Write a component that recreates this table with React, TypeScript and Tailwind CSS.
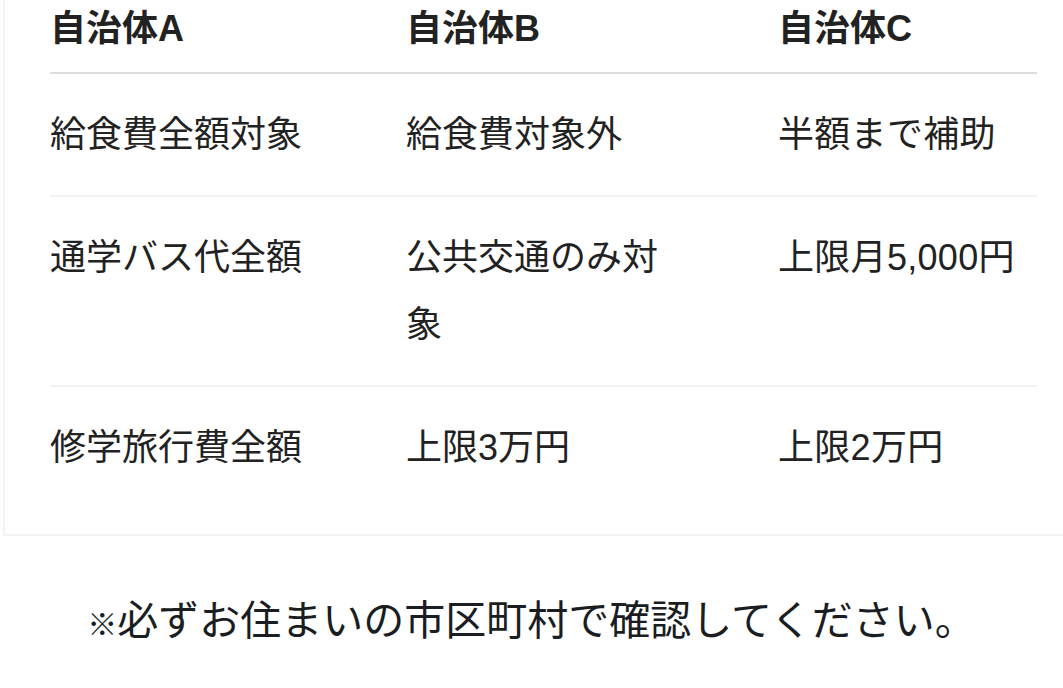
import React from "react";

type Row = { a: string; b: string; c: string };

const rows: Row[] = [
  { a: "給食費全額対象", b: "給食費対象外", c: "半額まで補助" },
  { a: "通学バス代全額", b: "公共交通のみ対象", c: "上限月5,000円" },
  { a: "修学旅行費全額", b: "上限3万円", c: "上限2万円" },
];

const font = {
  fontFamily: '"Liberation Sans", "Noto Sans CJK JP", sans-serif',
};

export default function App() {
  return (
    <div className="w-[1063px] h-[688px] overflow-hidden bg-white" style={font}>
      {/* comparison card, top edge is cut off by the viewport */}
      <div className="ml-[3px] w-[1080px] border-x-2 border-b-2 border-[#f1f3f4] pl-[45px] pb-[26px]">
        <table className="table-fixed border-collapse text-[#222222]">
          <colgroup>
            <col className="w-[356px]" />
            <col className="w-[372px]" />
            <col className="w-[259px]" />
          </colgroup>
          <thead>
            <tr className="border-b-2 border-[#dddddd]">
              {["自治体A", "自治体B", "自治体C"].map((h) => (
                <th
                  key={h}
                  className="pt-[9px] pb-[23px] text-left text-[36px] leading-[40px] font-bold"
                >
                  {h}
                </th>
              ))}
            </tr>
          </thead>
          <tbody>
            {rows.map((r, i) => (
              <tr
                key={i}
                className={i < rows.length - 1 ? "border-b-2 border-[#f1f2f3]" : ""}
              >
                <td className="py-[27px] pr-4 align-top text-[36px] leading-[67px]">{r.a}</td>
                <td className="py-[27px] pr-[96px] align-top text-[36px] leading-[67px]">{r.b}</td>
                <td className="py-[27px] align-top text-[36px] leading-[67px] whitespace-nowrap tracking-[0.3px]">
                  {r.c}
                </td>
              </tr>
            ))}
          </tbody>
        </table>
      </div>

      <p className="mt-[56px] text-center text-[41px] leading-[58px] text-[#1a1d21]">
        <span className="text-[30px]">※</span>必ずお住まいの市区町村で確認してください。
      </p>
    </div>
  );
}
